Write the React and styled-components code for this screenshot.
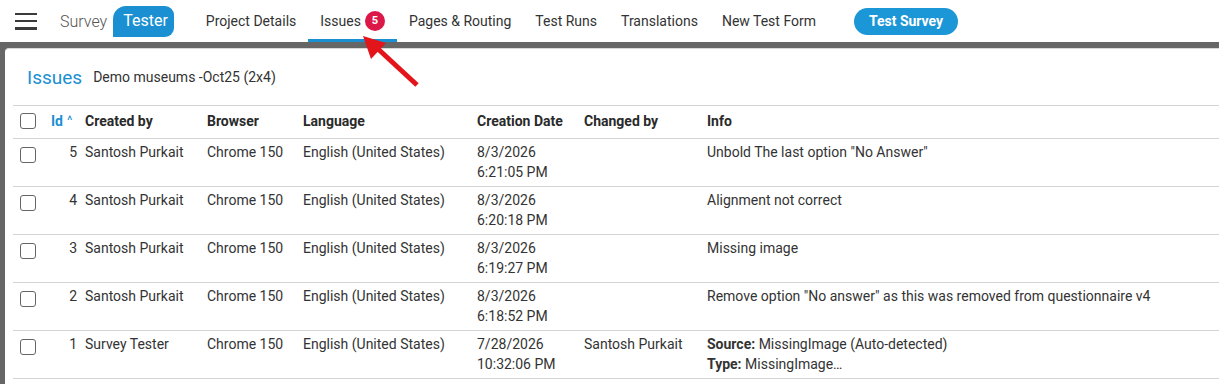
import styled, { createGlobalStyle } from "styled-components";

const GlobalStyle = createGlobalStyle`
  html, body {
    margin: 0;
    padding: 0;
    background: #fff;
    font-family: Roboto, "Liberation Sans", sans-serif;
    overflow: hidden;
  }
`;

const colors = {
  blue: "#1a8fd2",
  text: "#333",
  line: "#d4d4d4",
  frame: "#666",
};

const Page = styled.div`
  width: 1219px;
  height: 384px;
  position: relative;
  overflow: hidden;
`;

const TopBar = styled.header`
  height: 42px;
  display: flex;
  align-items: center;
  background: #fff;
`;

const Burger = styled.button`
  width: 22px;
  height: 17px;
  margin: 0 23px 0 15px;
  padding: 0;
  border: 0;
  background: none;
  display: flex;
  flex-direction: column;
  justify-content: space-between;

  span {
    display: block;
    height: 2.5px;
    background: #3a3a3a;
  }
`;

const Logo = styled.div`
  display: flex;
  align-items: center;
  font-size: 16px;
  margin-right: 20px;
`;

const LogoWord = styled.span`
  color: #555;
  font-weight: 300;
  margin-right: 6px;
`;

const LogoBubble = styled.span`
  color: #fff;
  background: ${colors.blue};
  height: 31px;
  line-height: 30px;
  padding: 0 6px 0 10px;
  border-radius: 13px 9px 9px 0;
`;

const Nav = styled.nav`
  display: flex;
  align-items: stretch;
  height: 42px;
`;

const Tab = styled.a`
  display: flex;
  align-items: center;
  padding: 2px 12px 0;
  font-size: 14px;
  color: ${colors.text};
  text-decoration: none;
  box-sizing: border-box;
  border-bottom: 3px solid ${(p) => (p.$active ? colors.blue : "transparent")};
`;

const Badge = styled.span`
  width: 20px;
  height: 20px;
  border-radius: 50%;
  margin-left: 4px;
  background: #dc1849;
  color: #fff;
  font-size: 11px;
  font-weight: 700;
  display: inline-flex;
  align-items: center;
  justify-content: center;
`;

const TestButton = styled.button`
  margin-left: 26px;
  height: 27px;
  width: 104px;
  border: 0;
  border-radius: 14px;
  background: #1b96d6;
  color: #fff;
  font-family: inherit;
  font-size: 14px;
  font-weight: 700;
`;

const Frame = styled.main`
  background: ${colors.frame};
  padding: 6px 0 0 5px;
`;

const Card = styled.section`
  background: #fff;
  border-top: 1px solid #d8d8d8;
  border-radius: 4px 0 0 0;
  padding-left: 8px;
  height: 340px;
`;

const CardHeader = styled.div`
  height: 56px;
  display: flex;
  align-items: center;
  padding-left: 14px;
`;

const CardTitle = styled.h2`
  margin: 0 11px 0 0;
  font-size: 19px;
  font-weight: 400;
  color: ${colors.blue};
`;

const CardSub = styled.span`
  font-size: 14px;
  color: ${colors.text};
`;

const Table = styled.table`
  border-collapse: collapse;
  table-layout: fixed;
  width: 1206px;
  font-size: 14px;
  color: ${colors.text};

  th,
  td {
    box-sizing: border-box;
  }
`;

const HeadRow = styled.tr`
  height: 33px;
`;

const Row = styled.tr`
  height: 48px;
`;

const Th = styled.th`
  padding: 0 4px 2px;
  text-align: left;
  font-weight: 700;
  color: #2a2a2a;
  border-top: 1px solid ${colors.line};
  border-bottom: 1px solid ${colors.line};
  ${(p) => p.$first && "padding-left: 7px;"}
`;

const SortHead = styled.span`
  color: ${colors.blue};
  font-weight: 700;
  padding-left: 2px;

  small {
    font-size: 13px;
    font-weight: 400;
    margin-left: 4px;
    position: relative;
    top: -1px;
  }
`;

const Td = styled.td`
  vertical-align: top;
  padding: 3px 4px 0;
  line-height: 20px;
  border-bottom: 1px solid ${colors.line};
  text-align: ${(p) => (p.$right ? "right" : "left")};
  ${(p) => p.$first && "padding: 8px 0 0 7px;"}
`;

const Check = styled.span`
  display: block;
  width: 14px;
  height: 14px;
  border: 1px solid #666;
  border-radius: 3px;
  box-sizing: content-box;
`;

const Arrow = styled.svg`
  position: absolute;
  left: 355px;
  top: 28px;
`;

const tabs = [
  "Project Details",
  "Issues",
  "Pages & Routing",
  "Test Runs",
  "Translations",
  "New Test Form",
];

const columns = [32, 36, 122, 96, 174, 107, 123, 516];

const issues = [
  { id: 5, by: "Santosh Purkait", date: "8/3/2026", time: "6:21:05 PM", changed: "", info: 'Unbold The last option "No Answer"' },
  { id: 4, by: "Santosh Purkait", date: "8/3/2026", time: "6:20:18 PM", changed: "", info: "Alignment not correct" },
  { id: 3, by: "Santosh Purkait", date: "8/3/2026", time: "6:19:27 PM", changed: "", info: "Missing image" },
  { id: 2, by: "Santosh Purkait", date: "8/3/2026", time: "6:18:52 PM", changed: "", info: 'Remove option "No answer" as this was removed from questionnaire v4' },
  { id: 1, by: "Survey Tester", date: "7/28/2026", time: "10:32:06 PM", changed: "Santosh Purkait", detected: true },
];

export default function App() {
  return (
    <Page>
      <GlobalStyle />
      <TopBar>
        <Burger aria-label="menu">
          <span />
          <span />
          <span />
        </Burger>
        <Logo>
          <LogoWord>Survey</LogoWord>
          <LogoBubble>Tester</LogoBubble>
        </Logo>
        <Nav>
          {tabs.map((t) => (
            <Tab key={t} $active={t === "Issues"}>
              {t}
              {t === "Issues" && <Badge>5</Badge>}
            </Tab>
          ))}
        </Nav>
        <TestButton>Test Survey</TestButton>
      </TopBar>

      <Frame>
        <Card>
          <CardHeader>
            <CardTitle>Issues</CardTitle>
            <CardSub>Demo museums -Oct25 (2x4)</CardSub>
          </CardHeader>
          <Table>
            <colgroup>
              {columns.map((w, i) => (
                <col key={i} style={{ width: w }} />
              ))}
            </colgroup>
            <thead>
              <HeadRow>
                <Th $first>
                  <Check />
                </Th>
                <Th>
                  <SortHead>
                    Id<small>^</small>
                  </SortHead>
                </Th>
                <Th>Created by</Th>
                <Th>Browser</Th>
                <Th>Language</Th>
                <Th>Creation Date</Th>
                <Th>Changed by</Th>
                <Th>Info</Th>
              </HeadRow>
            </thead>
            <tbody>
              {issues.map((row) => (
                <Row key={row.id}>
                  <Td $first>
                    <Check />
                  </Td>
                  <Td $right>{row.id}</Td>
                  <Td>{row.by}</Td>
                  <Td>Chrome 150</Td>
                  <Td>English (United States)</Td>
                  <Td>
                    {row.date}
                    <br />
                    {row.time}
                  </Td>
                  <Td>{row.changed}</Td>
                  <Td>
                    {row.detected ? (
                      <>
                        <b>Source:</b> MissingImage (Auto-detected)
                        <br />
                        <b>Type:</b> MissingImage…
                      </>
                    ) : (
                      row.info
                    )}
                  </Td>
                </Row>
              ))}
            </tbody>
          </Table>
        </Card>
      </Frame>

      <Arrow width="70" height="66" viewBox="0 0 70 66">
        <line x1="22" y1="20" x2="62" y2="57" stroke="#e3151b" strokeWidth="5" />
        <polygon points="8,8 31,15 16,31" fill="#e3151b" />
      </Arrow>
    </Page>
  );
}
